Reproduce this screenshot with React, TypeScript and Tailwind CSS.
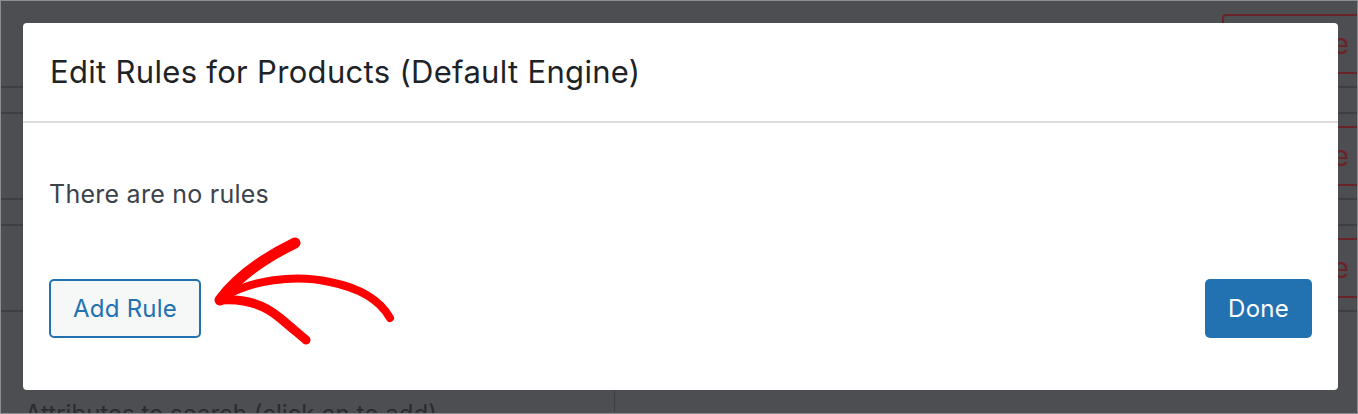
import React from 'react';

const rows = [0, 1, 2];

const App: React.FC = () => {
  return (
    <div
      className="relative w-[1358px] h-[414px] overflow-hidden bg-[#4d4e52] border border-[#8c8d90]"
      style={{ fontFamily: 'Inter, "Noto Sans", sans-serif' }}
    >
      {/* Page behind the overlay */}
      <div className="flex flex-col pt-[1px]">
        {rows.map((r) => (
          <React.Fragment key={r}>
            <div className="flex h-[86px] items-center border-b-2 border-[#3e3f43]">
              <div className="flex-1" />
              <div className="mr-[-40px] flex h-[60px] w-[175px] items-center justify-end rounded-[4px] border-2 border-[#6a2326] pr-[46px] text-[28px] text-[#6a2326]">
                Remove
              </div>
            </div>
            {r < 2 && <div className="h-[26px] border-b-2 border-[#3e3f43]" />}
          </React.Fragment>
        ))}
        <div className="flex h-[100px]">
          <div className="w-[614px] border-r border-[#3e3f43] pl-[24px] pt-[90px] text-[24px] leading-none text-[#2a2b2e]">
            Attributes to search (click on to add)
          </div>
        </div>
      </div>

      {/* Modal */}
      <div className="absolute left-[22px] top-[22px] flex h-[367px] w-[1315px] flex-col rounded-[4px] bg-white">
        <div className="flex h-[100px] items-center border-b-2 border-[#dcdcde] px-[27px]">
          <h1 className="text-[31px] font-normal tracking-[0.01em] text-[#1d2327]">
            Edit Rules for Products (Default Engine)
          </h1>
        </div>
        <div className="flex flex-1 flex-col px-[26px] pt-[55px]">
          <p className="text-[25px] leading-[33px] tracking-[0.01em] text-[#3c434a]">There are no rules</p>
          <div className="mt-[68px] flex items-center justify-between">
            <button className="h-[59px] w-[152px] rounded-[5px] border-2 border-[#2271b1] bg-[#f6f7f7] text-[24px] tracking-[0.01em] text-[#2271b1]">
              Add Rule
            </button>
            <button className="h-[59px] w-[107px] rounded-[5px] bg-[#2271b1] text-[24px] tracking-[0.01em] text-white">
              Done
            </button>
          </div>
        </div>
      </div>

      {/* Red arrow annotation */}
      <svg
        className="absolute left-[199px] top-[229px]"
        width="210"
        height="120"
        viewBox="0 0 210 120"
        fill="none"
        stroke="#ff0000"
        strokeLinecap="round"
        strokeLinejoin="round"
      >
        <path d="M20 70 C 35 50, 60 30, 95 13" strokeWidth="11" />
        <path d="M22 68 C 50 50, 95 44, 130 52 C 160 58, 180 70, 190 88" strokeWidth="8" />
        <path d="M20 70 C 45 68, 65 75, 80 88 C 92 98, 100 105, 106 110" strokeWidth="9" />
      </svg>
    </div>
  );
};

export default App;
